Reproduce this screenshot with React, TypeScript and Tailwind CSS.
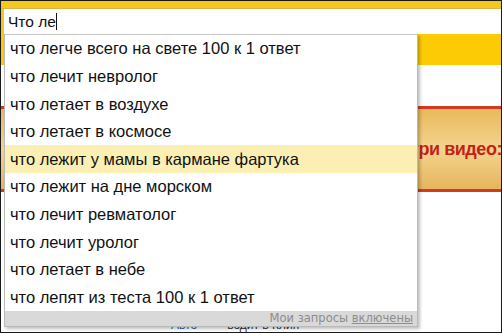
import React from 'react';

const suggestions = [
  'что легче всего на свете 100 к 1 ответ',
  'что лечит невролог',
  'что летает в воздухе',
  'что летает в космосе',
  'что лежит у мамы в кармане фартука',
  'что лежит на дне морском',
  'что лечит ревматолог',
  'что лечит уролог',
  'что летает в небе',
  'что лепят из теста 100 к 1 ответ',
];

const App: React.FC = () => (
  <div className="relative w-[502px] h-[333px] overflow-hidden border border-[#1a1a1a] bg-white font-['Liberation_Sans',Arial,sans-serif]">
    {/* page behind the dropdown */}
    <div className="flex flex-col h-full">
      <div className="h-[8px] bg-[#f4c81c] border-b border-[#d8b54a]" />
      <div className="flex h-[25px] bg-[#f4c81c]">
        <div className="ml-[3px] flex-1 bg-white flex items-center pl-[4px] text-[15.5px] text-[#111]">
          Что ле<span className="inline-block w-px h-[17px] bg-[#111]" />
        </div>
      </div>
      <div className="h-[31px] bg-[#fccb05]" />
      <div className="h-[41px] bg-white" />
      <div className="h-[86px] border-y-[3px] border-[#d33a22] bg-gradient-to-b from-[#e9b95a] via-[#f3d48e] to-[#e6b55c] flex items-center justify-end overflow-hidden">
        <span className="whitespace-nowrap text-[18px] font-bold text-[#c71f17] tracking-tight mr-[-1px]">Смотри видео:</span>
      </div>
      <div className="flex-1 bg-white flex items-end pl-[170px] gap-[30px] text-[12px] text-[#333] leading-none pb-[1px]">
        <span className="text-[#1f5fb4]">Авто</span>
        <span>водит в Клип</span>
      </div>
    </div>

    {/* suggestion dropdown */}
    <div className="absolute left-[3px] top-[33px] w-[414px] bg-white border-x border-b border-[#b9b9b9] shadow-[2px_2px_3px_rgba(0,0,0,0.25)]">
      <div className="border-t border-[#c8c8c8]">
        {suggestions.map((s, i) => (
          <div
            key={i}
            className={`h-[27.6px] flex items-center pl-[5px] text-[16.5px] text-[#111] whitespace-nowrap ${i === 4 ? 'bg-[#fcefb4]' : ''}`}
          >
            {s}
          </div>
        ))}
      </div>
      <div className="h-[15px] bg-[#d9d9d9] flex items-center justify-end pr-[4px] font-['DejaVu_Sans',Verdana,sans-serif] text-[11.5px] text-[#8c8c8c] leading-none">
        Мои запросы&nbsp;<span className="underline">включены</span>
      </div>
    </div>
  </div>
);

export default App;
